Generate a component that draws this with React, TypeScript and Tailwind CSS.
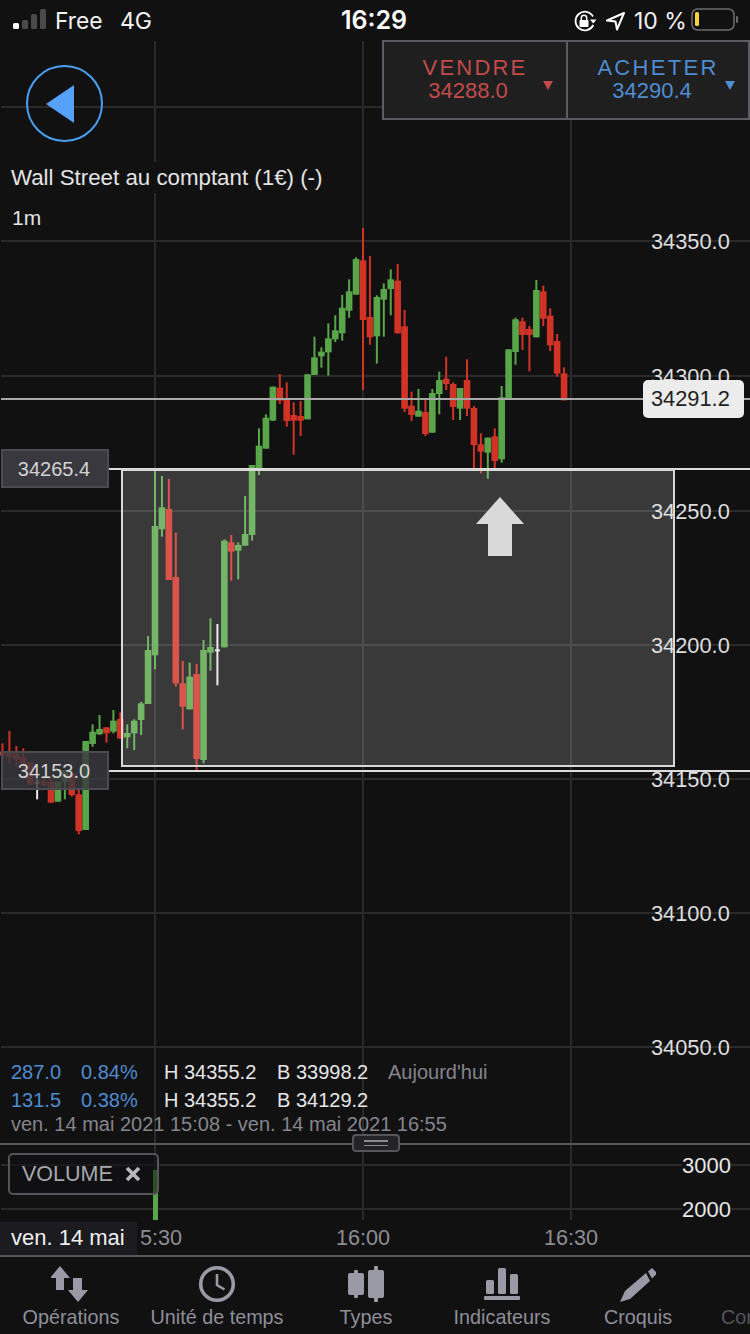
import React from "react";

type C = [string, number, number, number, number];
const G = "g", R = "r";
// zoom-coordinates from the left part of the chart (y = 450 + v / 3)
const left: C[] = [
  [R, 905, 916, 880, 925], [R, 910, 922, 843, 940], [R, 912, 928, 888, 950], [R, 922, 940, 895, 960],
  [R, 937, 1005, 937, 1005], ["w", 997, 1001, 985, 1048], [R, 993, 1005, 985, 1008], [R, 995, 1058, 985, 1058],
  [G, 995, 1055, 995, 1055], [G, 960, 995, 960, 1048], [R, 970, 1035, 960, 1040], [R, 1033, 1143, 1020, 1153],
  [G, 873, 1140, 873, 1140], [G, 845, 882, 823, 890], [G, 837, 853, 795, 855], [R, 832, 850, 832, 878],
  [G, 812, 845, 780, 850], [R, 807, 866, 787, 866], [G, 849, 862, 823, 895], [G, 812, 850, 808, 900],
  [G, 760, 810, 755, 855], [G, 600, 762, 558, 762], [G, 228, 616, 60, 658], [G, 172, 238, 78, 260],
  [R, 177, 390, 87, 390], [R, 381, 700, 248, 710], [R, 700, 770, 633, 838], [G, 680, 778, 638, 778],
  [R, 672, 927, 642, 960], [G, 600, 930, 570, 940], [G, 591, 608, 505, 662], ["w", 598, 604, 522, 706],
  [G, 272, 592, 268, 592], [R, 277, 305, 255, 392], [G, 285, 302, 277, 388], [G, 252, 287, 138, 287],
  [G, 45, 255, 45, 272],
];
// zoom-coordinates from the upper part of the chart (y = 220 + v / 3)
const right: C[] = [
  [G, 677, 745, 625, 765], [G, 593, 686, 583, 686], [G, 500, 602, 500, 602], [R, 503, 542, 462, 552],
  [R, 540, 603, 487, 620], [R, 585, 602, 547, 704], [R, 588, 602, 543, 648], [G, 463, 598, 463, 598],
  [G, 412, 465, 350, 465], [G, 395, 409, 382, 443], [G, 355, 397, 310, 467], [G, 331, 358, 286, 366],
  [G, 263, 340, 225, 362], [G, 214, 272, 178, 293], [G, 117, 224, 112, 224], [R, 121, 300, 24, 510],
  [R, 291, 352, 108, 374], [G, 231, 349, 226, 431], [G, 207, 239, 190, 350], [G, 178, 207, 148, 286],
  [R, 182, 340, 132, 340], [R, 319, 566, 270, 576], [R, 557, 585, 515, 603], [G, 572, 590, 507, 590],
  [R, 576, 642, 540, 648], [G, 519, 638, 507, 638], [G, 480, 522, 455, 583], [R, 476, 492, 410, 510],
  [R, 492, 561, 487, 600], [G, 504, 566, 504, 600], [R, 480, 566, 418, 588], [R, 564, 675, 558, 745],
  [R, 673, 695, 640, 760], [G, 653, 698, 653, 776], [R, 649, 723, 625, 745], [G, 532, 718, 498, 728],
  [G, 388, 534, 388, 534], [G, 298, 396, 293, 434], [R, 304, 345, 293, 390], [R, 327, 345, 318, 454],
  [G, 210, 352, 180, 352], [R, 214, 296, 197, 318], [R, 287, 376, 265, 393], [R, 363, 461, 342, 470],
  [R, 460, 541, 442, 541],
];

const colorOf = (c: string) => (c === G ? "#59a64a" : c === R ? "#d23327" : "#e8e8e8");

function Candle({ c, i, base }: { c: C; i: number; base: number }) {
  const x = 155 + i * 6.9333;
  const [k, bt, bb, wt, wb] = c;
  const f = colorOf(k);
  const y = (v: number) => base + v / 3;
  const w = k === "w" ? 5 : 6.6;
  return (
    <g>
      <rect x={x - 1} y={y(wt)} width={2} height={(wb - wt) / 3} fill={f} />
      <rect x={x - w / 2} y={y(bt)} width={w} height={Math.max((bb - bt) / 3, 1)} fill={f} />
    </g>
  );
}

function ChartLayer() {
  const hs = [107, 241, 376, 511, 645, 779, 913, 1047, 1165, 1209];
  return (
    <svg className="absolute top-0 left-0 w-[750px] h-[1334px]" viewBox="0 0 750 1334">
      {hs.map((y) => (
        <rect key={y} x={1} y={y - 1} width={749} height={2} fill="#2a2a2a" />
      ))}
      {[155, 363, 571].map((x) => (
        <rect key={x} x={x - 1} y={41} width={2} height={1179} fill="#2a2a2a" />
      ))}
      {left.map((c, n) => (
        <Candle key={"l" + n} c={c} i={n - 22} base={450} />
      ))}
      {right.map((c, n) => (
        <Candle key={"r" + n} c={c} i={n + 15} base={220} />
      ))}
      <rect x={153} y={1170} width={5} height={50} fill="#59a64a" />
      <rect x={1} y={398} width={749} height={2} fill="#a8a8a8" />
      <rect x={108} y={468} width={642} height={2} fill="#dcdcdc" />
      <rect x={108} y={770} width={642} height={2} fill="#dcdcdc" />
      <rect x={122} y={470} width={552} height={296} fill="#ffffff" fillOpacity={0.17} stroke="#d8d8d8" strokeWidth={2} />
      <polygon points="500,497 524,524 512,524 512,556 488,556 488,524 476,524" fill="#d9d9d9" />
    </svg>
  );
}

const axis = [
  { t: "34350.0", c: "top-[229px]" },
  { t: "34300.0", c: "top-[364px]" },
  { t: "34250.0", c: "top-[499px]" },
  { t: "34200.0", c: "top-[633px]" },
  { t: "34150.0", c: "top-[767px]" },
  { t: "34100.0", c: "top-[901px]" },
  { t: "34050.0", c: "top-[1035px]" },
];

function Tab({ w, label, children }: { w: string; label: string; children?: React.ReactNode }) {
  return (
    <div className={`${w} shrink-0 flex flex-col items-center pt-[7px]`}>
      <div className="h-[40px] w-[40px]">{children}</div>
      <span className="mt-[1px] text-[19.8px] leading-[24px] whitespace-nowrap text-[#8f8f99]">{label}</span>
    </div>
  );
}

const ICON = "#9a9aa6";

export default function App() {
  return (
    <div
      className="relative w-[750px] h-[1334px] overflow-hidden bg-[#111112] flex flex-col text-white"
      style={{ fontFamily: '"Liberation Sans", Arial, sans-serif' }}
    >
      <ChartLayer />

      {/* status bar */}
      <div className="relative h-[40px] shrink-0 flex items-center bg-[#111112] font-['Inter',sans-serif]">
        <svg className="absolute left-[13px] top-[8px] w-[34px] h-[22px]" viewBox="0 0 34 22">
          <rect x={0} y={15} width={6} height={6} rx={1.5} fill="#fff" />
          <rect x={9} y={12} width={6} height={9} rx={1.5} fill="#4a4a4a" />
          <rect x={18} y={6} width={6} height={15} rx={1.5} fill="#4a4a4a" />
          <rect x={27} y={1} width={6} height={20} rx={1.5} fill="#4a4a4a" />
        </svg>
        <span className="absolute left-[55px] top-[7px] text-[22.8px] leading-[28px] text-[#f2f2f2]">Free</span>
        <span className="absolute left-[120px] top-[7px] text-[23px] leading-[28px] text-[#f2f2f2]">4G</span>
        <span className="absolute left-[341px] top-[6px] text-[25px] leading-[28px] font-semibold">16:29</span>
        <svg className="absolute left-[573px] top-[10px] w-[24px] h-[22px]" viewBox="0 0 24 22" fill="none">
          <path d="M20 6.5 A9.3 9.3 0 1 0 20.3 15" stroke="#fff" strokeWidth={1.8} />
          <polygon points="17,9.5 23.5,9.5 20.2,13.5" fill="#fff" />
          <rect x={6.5} y={10} width={9} height={7} rx={1} fill="#fff" />
          <path d="M8.3 10 V8 a2.7 2.7 0 0 1 5.4 0 V10" stroke="#fff" strokeWidth={1.5} />
        </svg>
        <svg className="absolute left-[605px] top-[11px] w-[21px] h-[20px]" viewBox="0 0 21 20" fill="none">
          <polygon points="19,2 2,9.5 10.5,10.5 12,18.5" stroke="#fff" strokeWidth={2} strokeLinejoin="round" />
        </svg>
        <span className="absolute left-[634px] top-[7px] text-[23px] leading-[28px] text-[#f2f2f2] whitespace-nowrap">10 %</span>
        <svg className="absolute left-[691px] top-[8px] w-[48px] h-[24px]" viewBox="0 0 48 24" fill="none">
          <rect x={1} y={1} width={42} height={21} rx={5.5} stroke="#6c6c6c" strokeWidth={1.5} />
          <rect x={4} y={4} width={4} height={14} rx={1.5} fill="#f6d33c" />
          <rect x={45} y={8} width={2} height={7} rx={1} fill="#6c6c6c" />
        </svg>
      </div>

      {/* header row */}
      <div className="relative h-[122px] shrink-0 flex items-start justify-between">
        <div className="ml-[26px] mt-[25px] w-[77px] h-[77px] rounded-full border-2 border-[#4a9ff0] flex items-center justify-center">
          <svg className="w-[30px] h-[40px] -ml-[9px]" viewBox="0 0 30 40">
            <polygon points="1,20 29,1 29,39" fill="#55a2f8" />
          </svg>
        </div>
        <div className="w-[368px] h-[80px] flex border-2 border-[#5c5c62] bg-[#1f1f20]">
          <div className="relative w-[184px] shrink-0 border-r-2 border-[#5c5c62] flex flex-col items-center pt-[14px] pr-[8px] text-[#c24b4b]">
            <span className="text-[22px] leading-[24px] tracking-[2.2px] pl-[8px]">VENDRE</span>
            <span className="mr-[6px] text-[22px] leading-[22px]">34288.0</span>
            <span className="absolute left-[159px] top-[39px] w-0 h-0 border-l-[5px] border-r-[5px] border-t-[9px] border-l-transparent border-r-transparent border-t-[#c24b4b]" />
          </div>
          <div className="relative flex-1 flex flex-col items-center pt-[14px] pr-[12px] text-[#4f8ccf]">
            <span className="text-[22px] leading-[24px] tracking-[2.3px] pl-[12px]">ACHETER</span>
            <span className="text-[22px] leading-[22px]">34290.4</span>
            <span className="absolute left-[157px] top-[39px] w-0 h-0 border-l-[5px] border-r-[5px] border-t-[9px] border-l-transparent border-r-transparent border-t-[#4f8ccf]" />
          </div>
        </div>
      </div>

      {/* title */}
      <div className="relative h-[31px] shrink-0 w-[330px] bg-[#111112] pl-[11px] text-[22.3px] leading-[31px] text-[#e4e4e4] whitespace-nowrap">
        Wall Street au comptant (1€) (-)
      </div>
      <div className="relative pl-[12px] pt-[9px] text-[21px] leading-[31px] text-[#e4e4e4]">1m</div>

      {/* price axis */}
      {axis.map((a) => (
        <span
          key={a.t}
          className={`absolute left-[651px] ${a.c} text-[21.8px] leading-[26px] text-[#dedede] whitespace-nowrap`}
        >
          {a.t}
        </span>
      ))}
      <div className="absolute left-[643px] top-[380px] w-[101px] h-[38px] rounded-[5px] bg-[#ececec] flex items-center pl-[8px] text-[21.8px] text-[#222]">
        34291.2
      </div>
      <div className="absolute left-[1px] top-[449px] w-[108px] h-[39px] border-2 border-[#4b4b51] bg-[#38383e] flex items-center justify-center pr-[2px] text-[20px] text-[#d2d2d2]">
        34265.4
      </div>
      <div className="absolute left-[1px] top-[751px] w-[108px] h-[39px] border-2 border-[#4b4b51] bg-[#38383ed0] flex items-center justify-center pr-[2px] text-[20px] text-[#d2d2d2]">
        34153.0
      </div>

      <div className="flex-1" />

      {/* stats */}
      <div className="relative h-[83px] shrink-0 -mt-[2px] mb-[2px] text-[20px] leading-[28px] whitespace-nowrap">
        <div className="flex h-[28px]">
          <span className="w-[70px] ml-[11px] text-[#4f8ccf]">287.0</span>
          <span className="w-[83px] text-[#4f8ccf]">0.84%</span>
          <span className="w-[113px] text-[#e6e6e6]">H 34355.2</span>
          <span className="w-[111px] text-[#e6e6e6]">B 33998.2</span>
          <span className="text-[#85858c]">Aujourd'hui</span>
        </div>
        <div className="flex h-[28px]">
          <span className="w-[70px] ml-[11px] text-[#4f8ccf]">131.5</span>
          <span className="w-[83px] text-[#4f8ccf]">0.38%</span>
          <span className="w-[113px] text-[#e6e6e6]">H 34355.2</span>
          <span className="w-[111px] text-[#e6e6e6]">B 34129.2</span>
        </div>
        <div className="ml-[11px] -mt-[4px] text-[#85858c] text-[20px]">ven. 14 mai 2021 15:08 - ven. 14 mai 2021 16:55</div>
      </div>

      {/* divider + handle */}
      <div className="relative h-[2px] shrink-0 bg-[#55555a]">
        <div className="absolute left-[352px] -top-[9px] w-[48px] h-[18px] rounded-[4px] border-2 border-[#55555a] bg-[#232326] flex flex-col items-center justify-center gap-[3px]">
          <span className="block w-[24px] h-[1.5px] bg-[#8a8a90]" />
          <span className="block w-[24px] h-[1.5px] bg-[#8a8a90]" />
        </div>
      </div>

      {/* volume */}
      <div className="relative h-[77px] shrink-0">
        <div className="absolute left-[8px] top-[8px] w-[151px] h-[42px] rounded-[5px] border-2 border-[#555559] bg-[#11111299] flex items-center pl-[12px] gap-[12px] text-[#a8a8ac] text-[21.5px]">
          <span>VOLUME</span>
          <svg className="w-[16px] h-[16px]" viewBox="0 0 16 16">
            <path d="M2 2 L14 14 M14 2 L2 14" stroke="#b8b8bc" strokeWidth={3.6} />
          </svg>
        </div>
        <span className="absolute left-[682px] top-[8px] text-[22px] leading-[26px] text-[#e6e6e6] bg-[#111112]">3000</span>
        <span className="absolute left-[682px] top-[52px] text-[22px] leading-[26px] text-[#e6e6e6] bg-[#111112]">2000</span>
      </div>

      {/* time axis */}
      <div className="relative h-[33px] shrink-0 text-[21.6px] leading-[32px] text-[#8d8d93]">
        <span className="absolute left-[140px] top-0">5:30</span>
        <span className="absolute left-[336px] top-0">16:00</span>
        <span className="absolute left-[544px] top-0">16:30</span>
        <div className="absolute left-0 top-0 w-[137px] h-[33px] bg-[#1b1b20] pl-[11px] text-[22px] text-[#f0f0f0] whitespace-nowrap">ven. 14 mai</div>
      </div>

      {/* tab bar */}
      <div className="relative h-[79px] shrink-0 flex border-t-2 border-[#55555a] overflow-hidden">
        <Tab w="w-[142px]" label="Opérations">
          <svg viewBox="51 1264 40 40" className="w-[40px] h-[40px]">
            <polygon points="60,1266 70,1278 64,1278 64,1290 56,1290 56,1278 50,1278" fill={ICON} />
            <polygon points="73,1278 82,1278 82,1290 88,1290 78,1302 68,1290 73,1290" fill={ICON} />
          </svg>
        </Tab>
        <Tab w="w-[150px]" label="Unité de temps">
          <svg viewBox="198 1264 40 40" className="w-[40px] h-[40px]" fill="none">
            <circle cx={218} cy={1284} r={16.3} stroke={ICON} strokeWidth={3.6} />
            <path d="M218 1274 V1285 L225.5 1289.5" stroke={ICON} strokeWidth={2.6} />
          </svg>
        </Tab>
        <Tab w="w-[148px]" label="Types">
          <svg viewBox="347 1264 40 40" className="w-[40px] h-[40px]">
            <rect x={349} y={1273} width={16} height={22} rx={2} fill={ICON} />
            <rect x={355} y={1270} width={4} height={28} rx={1} fill={ICON} />
            <rect x={369} y={1270} width={16} height={28} rx={2} fill={ICON} />
            <rect x={375} y={1266} width={4} height={36} rx={1} fill={ICON} />
          </svg>
        </Tab>
        <Tab w="w-[124px]" label="Indicateurs">
          <svg viewBox="483 1264 40 40" className="w-[40px] h-[40px]">
            <rect x={487} y={1280} width={8} height={14} rx={1.5} fill={ICON} />
            <rect x={499} y={1268} width={8} height={26} rx={1.5} fill={ICON} />
            <rect x={511} y={1274} width={8} height={20} rx={1.5} fill={ICON} />
            <rect x={485} y={1296} width={36} height={4} rx={1} fill={ICON} />
          </svg>
        </Tab>
        <Tab w="w-[148px]" label="Croquis">
          <svg viewBox="619 1264 40 40" className="w-[40px] h-[40px]">
            <polygon points="621,1302 626,1291 647,1273 651,1281 631,1299" fill={ICON} />
            <polygon points="649,1271.5 653,1268 657,1272 657,1274.5 653,1278.5" fill={ICON} />
          </svg>
        </Tab>
        <div className="w-[38px] shrink-0 pl-[9px] pt-[48px] text-[19.8px] leading-[24px] text-[#55555a] whitespace-nowrap overflow-hidden">Cor</div>
      </div>
    </div>
  );
}
